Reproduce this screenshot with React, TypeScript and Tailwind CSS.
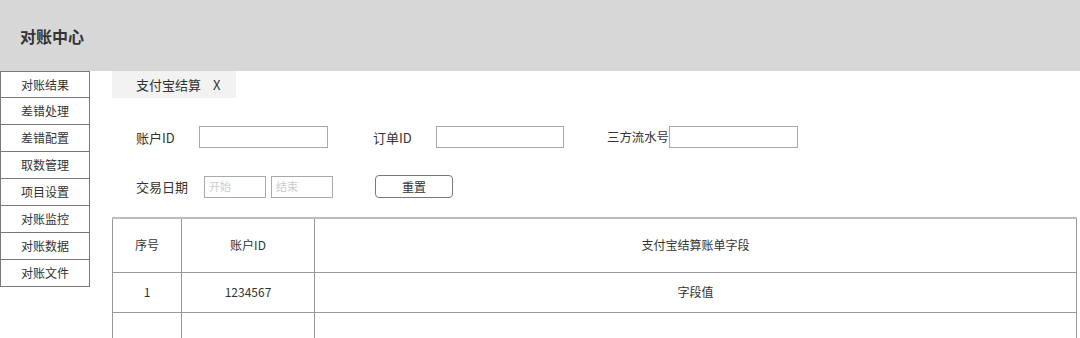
import React from "react"

const menu = ["对账结果", "差错处理", "差错配置", "取数管理", "项目设置", "对账监控", "对账数据", "对账文件"]

function Field({ label, labelW, inputW, size = "text-[13px]" }: { label: string; labelW: string; inputW: string; size?: string }) {
  return (
    <div className="flex items-center">
      <span className={`${labelW} ${size} whitespace-nowrap leading-none text-[#333]`}>{label}</span>
      <div className={`${inputW} h-[22px] border border-[#a9a9a9] bg-white`} />
    </div>
  )
}

export default function App() {
  return (
    <div className="w-[1080px] h-[338px] overflow-hidden bg-white text-[#333]" style={{ fontFamily: '"Noto Sans CJK SC", "Liberation Sans", sans-serif' }}>
      {/* header */}
      <div className="h-[71px] bg-[#d7d7d7] flex items-center pl-[20px]">
        <span className="text-[16px] font-bold leading-none text-[#333]">对账中心</span>
      </div>

      <div className="flex">
        {/* sidebar */}
        <div className="w-[90px] shrink-0">
          {menu.map((m, i) => (
            <div
              key={m}
              className={`h-[27px] border-x border-b border-[#797979] ${i === 0 ? "border-t" : ""} flex items-center justify-center text-[12px] leading-none`}
            >
              {m}
            </div>
          ))}
        </div>

        {/* main */}
        <div className="flex-1 pl-[22px] pr-[3px]">
          <div className="w-[124px] h-[27px] bg-[#f2f2f2] flex items-center pl-[24px] text-[13px] leading-none">
            支付宝结算<span className="ml-[12px]">X</span>
          </div>

          <div className="pl-[24px] pt-[28px]">
            <div className="flex items-center">
              <Field label="账户ID" labelW="w-[63px]" inputW="w-[129px]" />
              <div className="ml-[45px]">
                <Field label="订单ID" labelW="w-[63px]" inputW="w-[128px]" />
              </div>
              <div className="ml-[43px]">
                <Field label="三方流水号" labelW="w-[62px]" inputW="w-[129px]" size="text-[12.4px]" />
              </div>
            </div>

            <div className="flex items-center mt-[27px]">
              <span className="w-[68px] text-[13px] leading-none whitespace-nowrap">交易日期</span>
              <div className="w-[62px] h-[22px] border border-[#a9a9a9] flex items-center pl-[4px] text-[11px] leading-none text-[#ccc]">开始</div>
              <div className="w-[62px] h-[22px] border border-[#a9a9a9] ml-[5px] flex items-center pl-[4px] text-[11px] leading-none text-[#ccc]">结束</div>
              <button className="ml-[42px] w-[78px] h-[23px] border border-[#797979] rounded-[4px] text-[12px] leading-none bg-white">重置</button>
            </div>
          </div>

          <table className="mt-[19px] w-[965px] border-collapse text-[12px] leading-none table-fixed">
            <colgroup>
              <col className="w-[69px]" />
              <col className="w-[133px]" />
              <col />
            </colgroup>
            <tbody>
              <tr className="h-[54px]">
                <td className="border border-[#999] border-t-[#bbb] border-t-2 text-center">序号</td>
                <td className="border border-[#999] border-t-[#bbb] border-t-2 text-center">账户ID</td>
                <td className="border border-[#999] border-t-[#bbb] border-t-2 text-center">支付宝结算账单字段</td>
              </tr>
              <tr className="h-[40px]">
                <td className="border border-[#999] text-center">1</td>
                <td className="border border-[#999] text-center">1234567</td>
                <td className="border border-[#999] text-center">字段值</td>
              </tr>
              <tr className="h-[28px]">
                <td className="border border-[#999]" />
                <td className="border border-[#999]" />
                <td className="border border-[#999]" />
              </tr>
            </tbody>
          </table>
        </div>
      </div>
    </div>
  )
}
